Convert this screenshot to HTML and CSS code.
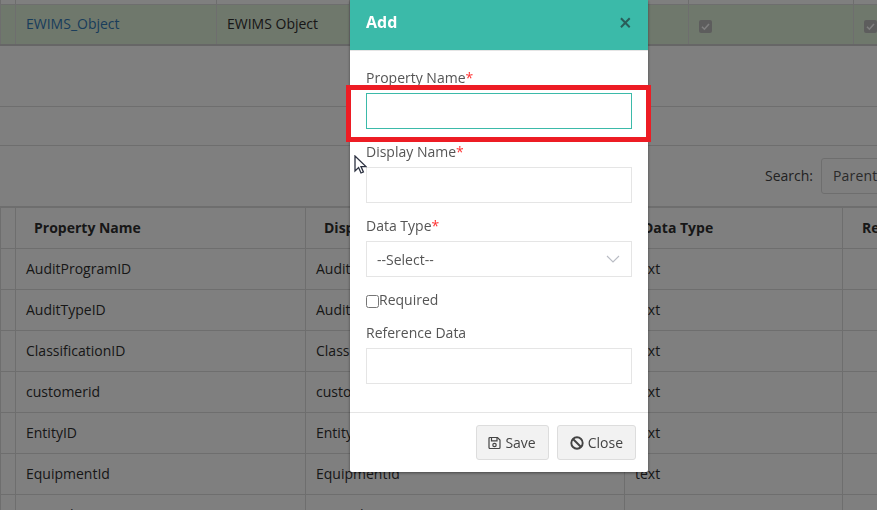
FILE: index.html
```html
<!DOCTYPE html>
<html lang="en">
<head>
<meta charset="utf-8">
<title>Add property</title>
<link rel="stylesheet" href="styles.css">
</head>
<body>
<main class="page">
  <table class="grid top-grid">
    <colgroup><col class="t1"><col class="t2"><col class="t3"><col class="t4"><col class="t5"><col class="t6"></colgroup>
    <tbody>
      <tr class="stub"><td></td><td></td><td></td><td></td><td></td><td></td></tr>
      <tr class="selected">
        <td></td>
        <td><a class="link" href="#">EWIMS_Object</a></td>
        <td>EWIMS Object</td>
        <td></td>
        <td><span class="check"><svg viewBox="0 0 13 13" width="13" height="13"><path d="M3 6.8l2.4 2.4L10 4" fill="none" stroke="#fff" stroke-width="1.6"/></svg></span></td>
        <td><span class="check"><svg viewBox="0 0 13 13" width="13" height="13"><path d="M3 6.8l2.4 2.4L10 4" fill="none" stroke="#fff" stroke-width="1.6"/></svg></span></td>
      </tr>
    </tbody>
  </table>
  <div class="band band-a"></div>
  <div class="band band-b"></div>
  <div class="search-row">
    <label class="search-label">Search:</label>
    <div class="search-box">Parent</div>
  </div>
  <table class="grid list-grid">
    <colgroup><col class="l1"><col class="l2"><col class="l3"><col class="l4"><col class="l5"></colgroup>
    <thead>
      <tr><th></th><th>Property Name</th><th>Display Name</th><th>Data Type</th><th class="th-last">Re</th></tr>
    </thead>
    <tbody>
      <tr><td></td><td>AuditProgramID</td><td>AuditProgramID</td><td>text</td><td></td></tr>
      <tr><td></td><td>AuditTypeID</td><td>AuditTypeID</td><td>text</td><td></td></tr>
      <tr><td></td><td>ClassificationID</td><td>ClassificationID</td><td>text</td><td></td></tr>
      <tr><td></td><td>customerid</td><td>customerid</td><td>text</td><td></td></tr>
      <tr><td></td><td>EntityID</td><td>EntityID</td><td>text</td><td></td></tr>
      <tr><td></td><td>EquipmentId</td><td>EquipmentId</td><td>text</td><td></td></tr>
      <tr><td></td><td>roomid</td><td>roomid</td><td>text</td><td></td></tr>
    </tbody>
  </table>
</main>

<div class="backdrop"></div>

<section class="modal">
  <header class="modal-head">
    <h2 class="modal-title">Add</h2>
    <span class="modal-x">×</span>
  </header>
  <div class="modal-body">
    <div class="field">
      <label class="field-label">Property Name<span class="req">*</span></label>
      <input class="input input-focus" type="text">
    </div>
    <div class="field">
      <label class="field-label">Display Name<span class="req">*</span></label>
      <input class="input" type="text">
    </div>
    <div class="field">
      <label class="field-label">Data Type<span class="req">*</span></label>
      <div class="input select">
        <span class="select-text">--Select--</span>
        <svg class="chev" viewBox="0 0 14 8" width="14" height="8"><path d="M1 1l6 6 6-6" fill="none" stroke="#b9bcc4" stroke-width="1.1"/></svg>
      </div>
    </div>
    <label class="check-row"><input class="native-check" type="checkbox">Required</label>
    <div class="field">
      <label class="field-label">Reference Data</label>
      <input class="input" type="text">
    </div>
  </div>
  <footer class="modal-foot">
    <button class="btn btn-save" type="button">
      <svg viewBox="0 0 13 14" width="13" height="14"><path d="M1 2.5a1 1 0 0 1 1-1h7.5L12 4v7.5a1 1 0 0 1-1 1H2a1 1 0 0 1-1-1z" fill="none" stroke="#444" stroke-width="1.2"/><path d="M3.5 1.8v3h5.5v-3" fill="none" stroke="#444" stroke-width="1.2"/><circle cx="6.5" cy="9" r="1.7" fill="none" stroke="#444" stroke-width="1.2"/></svg>
      Save
    </button>
    <button class="btn" type="button">
      <svg viewBox="0 0 14 14" width="14" height="14"><circle cx="7" cy="7" r="5.7" fill="none" stroke="#444" stroke-width="1.9"/><path d="M3 3l8 8" stroke="#444" stroke-width="1.9"/></svg>
      Close
    </button>
  </footer>
</section>

<div class="callout"></div>

<svg class="cursor" viewBox="0 0 13 20" width="13" height="20"><path d="M1 1v15l3.6-3.4 2.4 5.4 2.4-1-2.4-5.4h5z" fill="#fff" stroke="#2c3140" stroke-width="1.3"/></svg>
</body>
</html>
```
FILE: styles.css
```css
* { box-sizing: border-box; }
html, body { margin: 0; height: 100%; overflow: hidden; }
body {
  width: 877px;
  height: 510px;
  background: #fff;
  color: #444;
  font: 14px/20px "Open Sans", sans-serif;
}
.page { width: 877px; height: 510px; overflow: hidden; }

.grid {
  border-collapse: collapse;
  table-layout: fixed;
  color: #2f2f2f;
}
.grid td, .grid th {
  border: 1px solid #ddd;
  padding: 0 0 0 10px;
  white-space: nowrap;
  overflow: hidden;
  text-align: left;
}
.top-grid { width: 1041px; margin-top: -1px; }
.t1 { width: 15px; }
.t2 { width: 201px; }
.t3 { width: 133px; }
.t4 { width: 339px; }
.t5 { width: 165px; }
.t6 { width: 188px; }
.stub td { height: 5px; padding: 0; }
.selected td { height: 40px; background: #dff0d8; border-bottom: 2px solid #ccc; padding-bottom: 1px; }
.selected td .check { margin-top: 5px; }
.link { color: #337ab7; text-decoration: none; }
.check {
  display: block;
  width: 13px;
  height: 13px;
  border-radius: 2px;
  background: #bbb;
}
.check svg { display: block; }

.band { border-bottom: 1px solid #ddd; }
.band-a { height: 61px; }
.band-b { height: 39px; }

.search-row {
  height: 60px;
  display: flex;
  align-items: flex-start;
  justify-content: flex-end;
  gap: 8px;
  padding-top: 12px;
  margin-right: -60px;
}
.search-label { line-height: 36px; color: #444; }
.search-box {
  width: 116px;
  height: 36px;
  border: 1px solid #ddd;
  border-radius: 3px;
  padding-left: 11px;
  line-height: 34px;
  color: #555;
  font-size: 14px;
  letter-spacing: .2px;
}

.list-grid { width: 999px; border-top: 2px solid #ddd; }
.l1 { width: 15px; }
.l2 { width: 290px; }
.l3 { width: 319px; }
.l4 { width: 218px; }
.l5 { width: 157px; }
.list-grid th { height: 42px; font-weight: 700; padding-left: 18px; padding-top: 1px; color: #2f2f2f; }
.list-grid .th-last { padding-left: 19px; }
.list-grid td { height: 41px; }

.backdrop {
  position: fixed;
  inset: 0;
  background: rgba(0, 0, 0, .5);
}

.modal {
  position: fixed;
  left: 350px;
  top: 0;
  width: 298px;
  height: 472px;
  background: #fff;
  box-shadow: 0 1px 3px rgba(0, 0, 0, .45);
  border-radius: 0 0 2px 2px;
  display: flex;
  flex-direction: column;
}
.modal-head {
  height: 51px;
  flex: none;
  background: #3bbaa9;
  border-bottom: 1px solid #e5e5e5;
  display: flex;
  align-items: center;
  justify-content: space-between;
  padding: 0 16px 6px;
  color: #fff;
}
.modal-title { margin: 0; font-size: 16px; line-height: 44px; font-weight: 700; }
.modal-x { font-size: 23px; font-weight: 600; line-height: 42px; color: #2a5d59; }

.modal-body {
  flex: 1;
  padding: 17px 16px 0;
}
.field { display: flex; flex-direction: column; margin-bottom: 13px; }
.field-label { line-height: 20px; color: #555; margin-bottom: 5px; }
.req { color: #f33; }
.input {
  display: block;
  width: 266px;
  height: 36px;
  margin: 0;
  border: 1px solid #e5e5e5;
  background: #fff;
  outline: 0;
  padding: 0 10px;
  font: inherit;
  color: #555;
}
.input-focus { border-color: #3bbaa9; }
.select {
  display: flex;
  align-items: center;
  justify-content: space-between;
  padding-right: 11px;
}
.select-text { padding-top: 2px; }
.chev { display: block; }
.check-row {
  display: flex;
  align-items: center;
  height: 20px;
  margin: 13px 0;
  color: #555;
}
.native-check { margin: 2px 0 0; width: 13px; height: 13px; }

.modal-foot {
  flex: none;
  height: 60px;
  border-top: 1px solid #e5e5e5;
  display: flex;
  justify-content: flex-end;
  align-items: flex-start;
  gap: 8px;
  padding: 12px 12px 0 0;
}
.btn {
  display: flex;
  align-items: center;
  justify-content: center;
  gap: 4px;
  height: 35px;
  padding: 0 12px;
  border: 1px solid #ddd;
  border-radius: 3px;
  background: #f2f2f2;
  color: #444;
  font: inherit;
}
.btn-save { padding-left: 11px; }
.btn svg { display: block; }

.callout {
  position: fixed;
  left: 346px;
  top: 85px;
  width: 305px;
  height: 57px;
  border: 5px solid #ed1c24;
}
.cursor { position: fixed; left: 354px; top: 155px; }
```
